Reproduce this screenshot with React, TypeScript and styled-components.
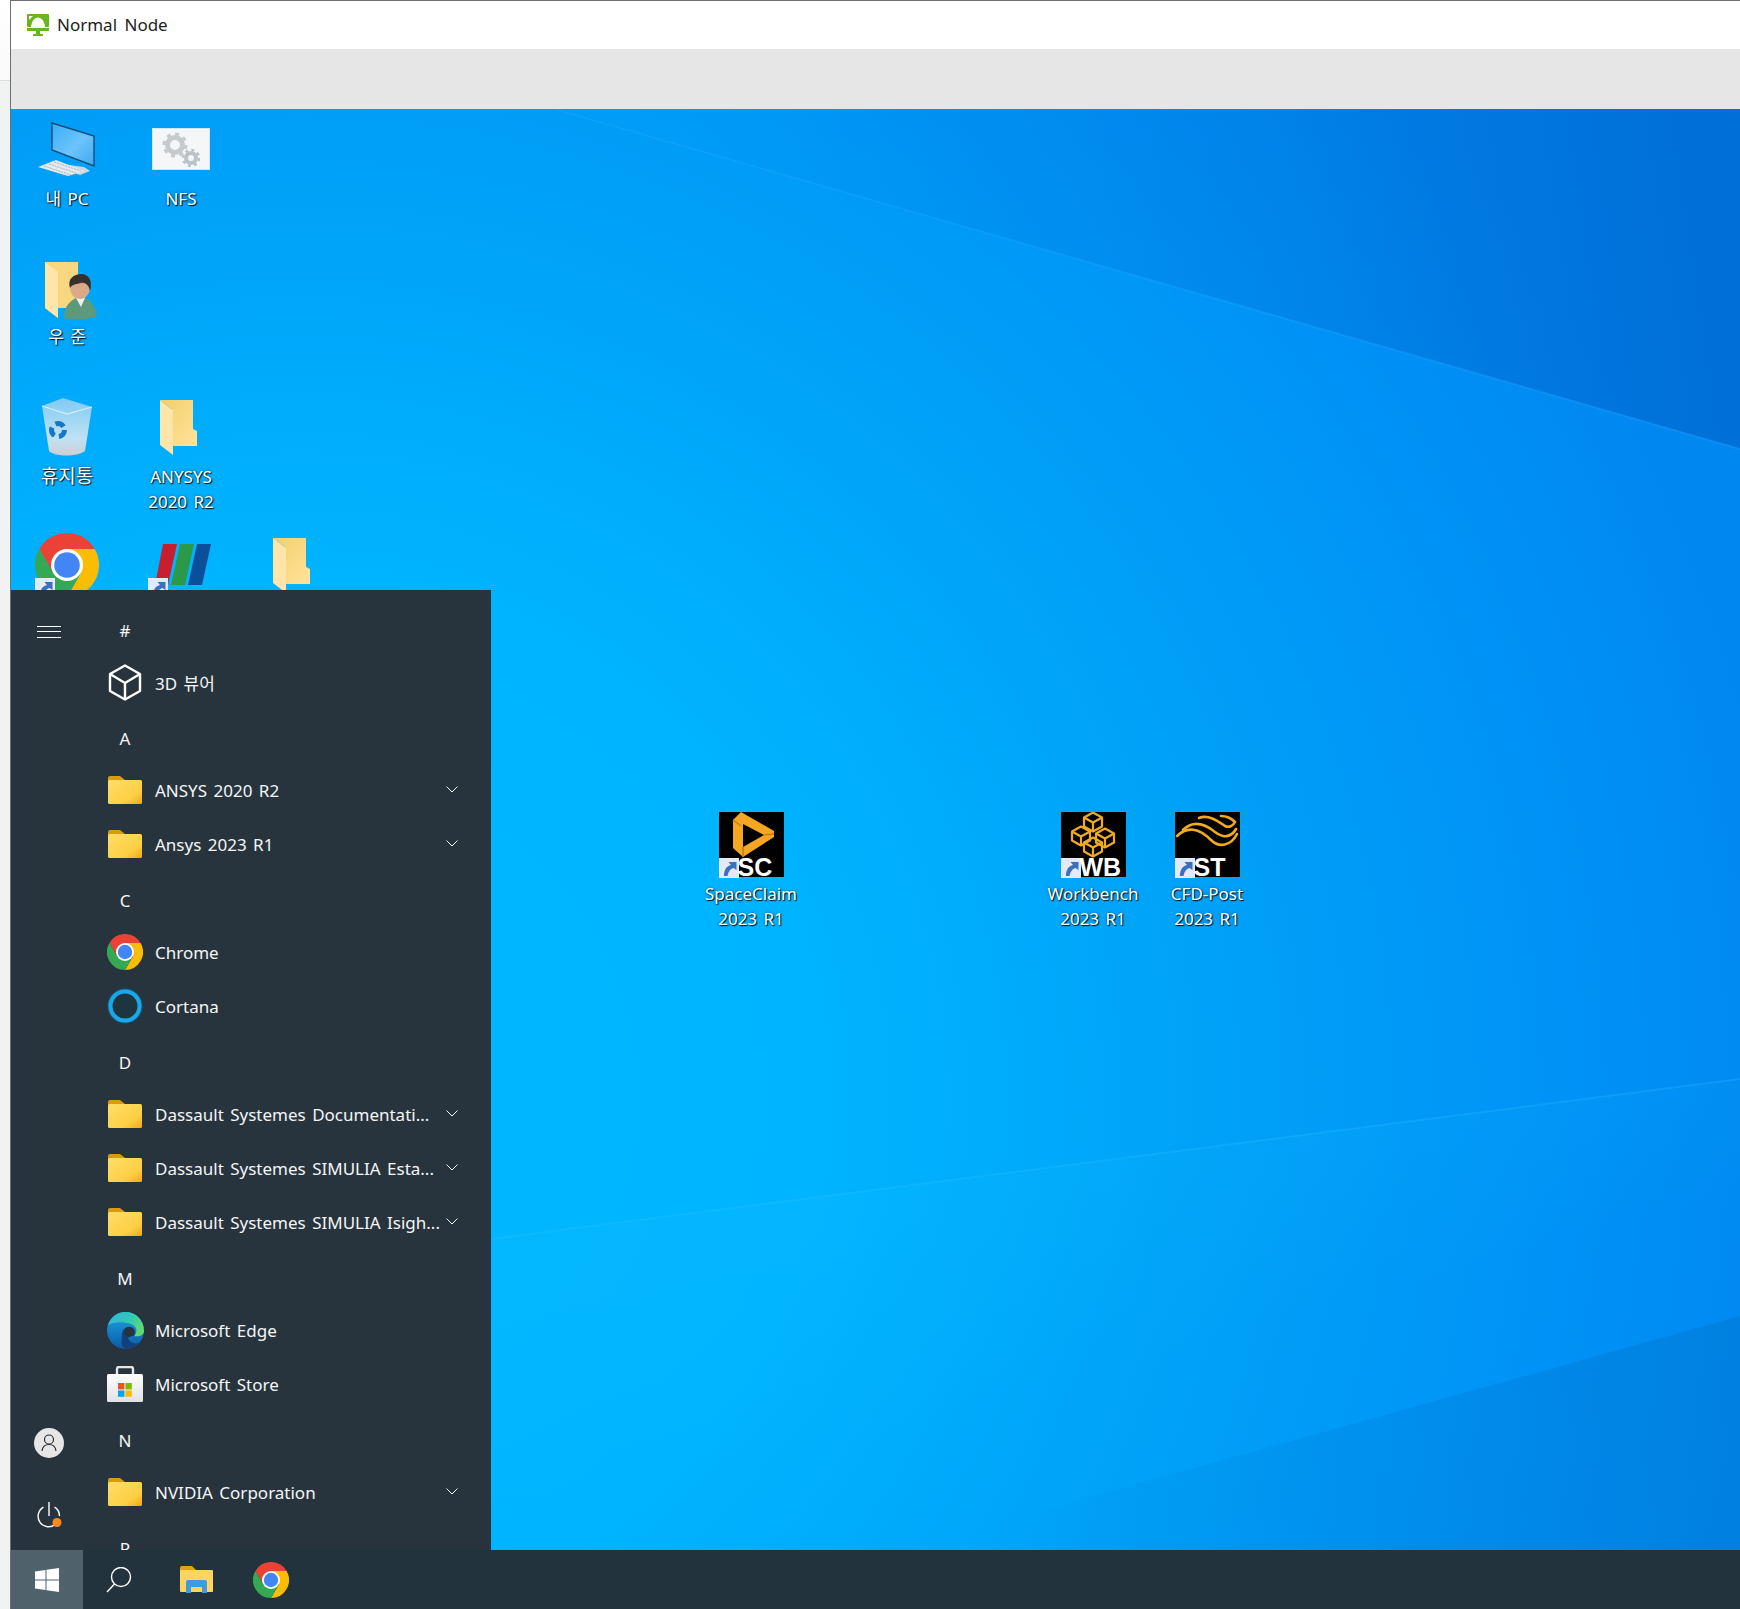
import React, { FC, ReactNode } from "react";
import styled, { createGlobalStyle } from "styled-components";

const GlobalStyle = createGlobalStyle`
  html, body { margin: 0; padding: 0; background: #f1f1f1; }
  * { box-sizing: border-box; }
  #root { font-family: "Noto Sans", "Noto Sans CJK KR", sans-serif; }
`;

// page frame
const Page = styled.div`
  display: flex;
  width: 1740px;
  height: 1609px;
  overflow: hidden;
`;

const SideStrip = styled.div`
  width: 10px;
  background: linear-gradient(#ffffff 0, #fafafa 80px, #dcdcdc 80px, #dcdcdc 81px, #f1f3f3 81px);
`;

const RemoteWindow = styled.div`
  flex: 1;
  display: flex;
  flex-direction: column;
  border-left: 1px solid #6f6f6f;
  border-top: 1px solid #6f6f6f;
`;

const TitleBar = styled.div`
  height: 48px;
  background: #fff;
  display: flex;
  align-items: center;
  gap: 8px;
  padding: 0 0 1px 16px;
  font-size: 17px;
  word-spacing: 3px;
  color: #222;
`;

const ToolBar = styled.div`
  height: 60px;
  background: #e6e6e6;
`;

const Desktop = styled.div`
  flex: 1;
  position: relative;
  overflow: hidden;
  background: #00a2f8;
`;

const Wall = styled.svg`
  position: absolute;
  inset: 0;
`;

// desktop icons sit on a free canvas
const DesktopItem = styled.div<{ $cx: number; $top: number }>`
  position: absolute;
  left: ${(p) => p.$cx - 60}px;
  top: ${(p) => p.$top}px;
  width: 120px;
  display: flex;
  flex-direction: column;
  align-items: center;
  color: #fff;
  line-height: 25px;
  text-align: center;
  word-spacing: 2px;
  text-shadow: 1px 1px 1px rgba(0, 0, 0, 0.9), 0 0 3px rgba(0, 40, 80, 0.6);
`;

const ItemLabel = styled.div<{ $size?: number }>`
  font-size: ${(p) => p.$size || 17}px;
`;

const IconBox = styled.div`
  position: relative;
  height: 66px;
  margin-bottom: 4px;
  display: flex;
  align-items: center;
  justify-content: center;
`;

const BadgeSpot = styled.div<{ $left: number; $top: number }>`
  position: absolute;
  left: ${(p) => p.$left}px;
  top: ${(p) => p.$top}px;
  width: 20px;
  height: 20px;
  line-height: 0;
`;

const Tile = styled.div`
  position: relative;
  width: 65px;
  height: 65px;
  background: #000;
  line-height: 0;
`;

const TileLabel = styled.span`
  position: absolute;
  left: 19px;
  bottom: 0;
  color: #fff;
  font-family: "Liberation Sans Narrow", "Liberation Sans", sans-serif;
  font-weight: 700;
  font-size: 25px;
  line-height: 20px;
  text-shadow: none;
`;

const NfsCard = styled.div`
  width: 58px;
  height: 42px;
  background: #f4f6f8;
  border: 1px solid #cfe6f2;
  line-height: 0;
`;

// start menu
const StartMenu = styled.div`
  position: absolute;
  left: 0;
  bottom: 0;
  width: 480px;
  height: 960px;
  display: flex;
  background: #27343d;
  color: #f4f6f7;
`;

const Rail = styled.div`
  width: 76px;
  display: flex;
  flex-direction: column;
  align-items: center;
  justify-content: space-between;
  padding: 36px 0 22px;
`;

const Burger = styled.div`
  width: 24px;
  height: 12px;
  border-top: 1px solid #fff;
  border-bottom: 1px solid #fff;
  position: relative;

  &::after {
    content: "";
    position: absolute;
    left: 0;
    right: 0;
    top: 4px;
    height: 1px;
    background: #fff;
  }
`;

const RailBottom = styled.div`
  display: flex;
  flex-direction: column;
  align-items: center;
  gap: 44px;
  line-height: 0;
`;

const AppList = styled.div`
  flex: 1;
  padding-top: 11px;
  overflow: hidden;
`;

const GroupHeader = styled.div`
  height: 54px;
  margin-left: 16px;
  width: 44px;
  padding-top: 5px;
  display: flex;
  align-items: center;
  justify-content: center;
  font-size: 17px;
`;

const AppRow = styled.div`
  height: 54px;
  display: flex;
  align-items: center;
  padding: 0 33px 0 16px;
  font-size: 17px;
  word-spacing: 2px;
`;

const AppIcon = styled.div`
  width: 44px;
  display: flex;
  justify-content: center;
  line-height: 0;
  margin-right: 8px;
`;

const AppName = styled.span`
  flex: 1;
  white-space: nowrap;
  padding-top: 1px;
`;

const Chevron = styled.svg`
  width: 12px;
  height: 7px;
  margin-top: -1px;
`;

// taskbar
const TaskBar = styled.div`
  height: 59px;
  background: #23333e;
  display: flex;
  position: relative;
`;

const TaskItem = styled.div<{ $w: number; $on?: boolean; $ml?: number }>`
  width: ${(p) => p.$w}px;
  margin-left: ${(p) => p.$ml || 0}px;
  background: ${(p) => (p.$on ? "#4f626c" : "transparent")};
  display: flex;
  align-items: center;
  justify-content: center;
  line-height: 0;
`;

// icons
const Wallpaper = () => (
  <Wall width="1729" height="1441" viewBox="11 109 1729 1441">
    <defs>
      <radialGradient id="wbase" gradientUnits="userSpaceOnUse" cx="300" cy="1100" r="1500">
        <stop offset="0" stopColor="#00b8ff" />
        <stop offset="0.35" stopColor="#00b4ff" />
        <stop offset="0.6" stopColor="#00a2f8" />
        <stop offset="0.85" stopColor="#0092f6" />
        <stop offset="1" stopColor="#0088f0" />
      </radialGradient>
      <linearGradient id="wtop" gradientUnits="userSpaceOnUse" x1="700" y1="260" x2="1740" y2="110">
        <stop offset="0" stopColor="#0068d0" stopOpacity="0" />
        <stop offset="0.55" stopColor="#0068d0" stopOpacity="0.28" />
        <stop offset="1" stopColor="#0068d0" stopOpacity="0.8" />
      </linearGradient>
      <linearGradient id="wlow" gradientUnits="userSpaceOnUse" x1="1000" y1="1560" x2="1740" y2="1380">
        <stop offset="0" stopColor="#0078d0" stopOpacity="0" />
        <stop offset="1" stopColor="#0078d0" stopOpacity="0.5" />
      </linearGradient>
      <linearGradient id="wband" gradientUnits="userSpaceOnUse" x1="1100" y1="1150" x2="1160" y2="1360">
        <stop offset="0" stopColor="#19c0ff" stopOpacity="0.12" />
        <stop offset="1" stopColor="#19c0ff" stopOpacity="0" />
      </linearGradient>
    </defs>
    <rect x="11" y="109" width="1729" height="1441" fill="url(#wbase)" />
    <polygon points="554,109 1740,449 1740,109" fill="url(#wtop)" />
    <polygon points="490,1239 1740,1079 1740,1400 490,1500" fill="url(#wband)" />
    <polygon points="900,1550 1740,1316 1740,1550" fill="url(#wlow)" />
    <line x1="554" y1="109" x2="1740" y2="449" stroke="#1aa4ff" strokeOpacity="0.4" strokeWidth="2" />
    <line x1="490" y1="1239" x2="1740" y2="1079" stroke="#3cc6ff" strokeOpacity="0.22" strokeWidth="2" />
  </Wall>
);

const NodeLogo = () => (
  <svg width="22" height="22" viewBox="0 0 22 22">
    <rect x="0" y="0" width="22" height="13" rx="1" fill="#6ab41e" />
    <path d="M4 13C4.6 7 7.5 3.6 11 3.6S17.4 7 18 13Z" fill="#fff" />
    <path d="M2 2H6L2 6Z" fill="#fff" />
    <rect x="0" y="14" width="22" height="3" fill="#6ab41e" />
    <rect x="9" y="17" width="4" height="3" fill="#6ab41e" />
    <rect x="6" y="20" width="10" height="2" fill="#6ab41e" />
  </svg>
);

const PcIcon = () => (
  <svg width="58" height="58" viewBox="0 0 58 58">
    <defs>
      <linearGradient id="pcs" x1="0" y1="0" x2="1" y2="1">
        <stop offset="0" stopColor="#3aaef8" />
        <stop offset="0.55" stopColor="#6cc4fb" />
        <stop offset="1" stopColor="#3fa9f5" />
      </linearGradient>
    </defs>
    <polygon points="24,44 46,47 52,51 42,55 24,49" fill="#cfd9df" />
    <polygon points="14,3 56,16 56,46 14,30" fill="url(#pcs)" stroke="#174f78" strokeWidth="1.4" />
    <polygon points="0,47 18,40 46,51 30,56" fill="#e4eaee" />
    <path d="M6 46L33 55M11 44L38 53M16 42L43 51" stroke="#a8b4bc" strokeWidth="1" strokeDasharray="2 1" />
  </svg>
);

const NfsIcon = () => (
  <NfsCard>
    <svg width="56" height="40" viewBox="0 0 56 40">
      <circle cx="22" cy="16" r="7.5" fill="none" stroke="#c5cacd" strokeWidth="5" />
      <circle cx="22" cy="16" r="11" fill="none" stroke="#c5cacd" strokeWidth="3" strokeDasharray="4 4.6" />
      <circle cx="38" cy="29" r="5" fill="none" stroke="#bcc2c5" strokeWidth="4" />
      <circle cx="38" cy="29" r="8" fill="none" stroke="#bcc2c5" strokeWidth="2.4" strokeDasharray="3 3.3" />
    </svg>
  </NfsCard>
);

const DeskFolder = () => (
  <svg width="42" height="56" viewBox="0 0 42 56">
    <defs>
      <linearGradient id="dfp" x1="0" y1="0" x2="1" y2="1">
        <stop offset="0" stopColor="#f3cf6c" />
        <stop offset="1" stopColor="#ffe39b" />
      </linearGradient>
    </defs>
    <path d="M0 1H33V30L37 32V47H12V10Z" fill="url(#dfp)" />
    <path d="M0 1L13 11V56L0 46Z" fill="#ffe6a8" />
  </svg>
);

const UserFolder = () => (
  <svg width="60" height="66" viewBox="0 0 60 66">
    <g transform="translate(8 8)">
      <path d="M0 0H33V46H13V56L0 46Z" fill="#f7d77f" />
      <path d="M0 0L13 10V56L0 46Z" fill="#ffe6a8" />
      <path d="M19 56C19 44 26 36 36 35C46 36 51 46 52 54C44 58 28 58 19 56Z" fill="#5d9a7b" />
      <path d="M31 36L36 45L40 36Z" fill="#eef2ee" />
      <ellipse cx="35" cy="26" rx="10" ry="11" fill="#d9a988" />
      <path d="M25 26C22 17 29 12 36 12C44 12 48 19 45 29C44 24 41 20 36 21C32 22 27 22 25 26Z" fill="#37302d" />
    </g>
  </svg>
);

const RecycleBin = () => (
  <svg width="52" height="58" viewBox="0 0 52 58">
    <defs>
      <linearGradient id="rb" x1="0" y1="0" x2="0" y2="1">
        <stop offset="0" stopColor="#7fcaf4" />
        <stop offset="0.7" stopColor="#bfe2f4" />
        <stop offset="1" stopColor="#cfcfd2" />
      </linearGradient>
    </defs>
    <path d="M1 8L22 0L51 9L44 53C36 59 14 59 8 53Z" fill="url(#rb)" />
    <path d="M1 8L26 16L51 9" fill="none" stroke="#d6f0fb" strokeWidth="1.2" />
    <circle cx="17" cy="32" r="6.5" fill="none" stroke="#1677c6" strokeWidth="5" strokeDasharray="9 4.6" />
  </svg>
);

const ChromeIcon: FC<{ size: number }> = ({ size }) => (
  <svg width={size} height={size} viewBox="0 0 48 48">
    <path d="M3.2 12A24 24 0 0 1 44.8 12H24L13.6 30Z" fill="#ea4335" />
    <path d="M44.8 12A24 24 0 0 1 24 48L34.4 30L24 12Z" fill="#fbbc04" />
    <path d="M24 48A24 24 0 0 1 3.2 12L13.6 30H34.4Z" fill="#34a853" />
    <circle cx="24" cy="24" r="12" fill="#fff" />
    <circle cx="24" cy="24" r="9.6" fill="#4285f4" />
  </svg>
);

const ParaviewIcon = () => (
  <svg width="62" height="42" viewBox="0 0 62 42">
    <polygon points="13,0 27,0 18,41 5,41" fill="#c81f30" />
    <polygon points="30,0 44,0 35,41 21,41" fill="#2a9a4a" />
    <polygon points="47,0 61,0 52,41 38,41" fill="#0b4f9a" />
  </svg>
);

const ShortcutBadge = () => (
  <svg width="20" height="20" viewBox="0 0 20 20">
    <rect width="20" height="20" fill="#e4e9f6" />
    <path d="M5 18C5 11 8 8 12 7L9.5 4H17.5V12L14.5 10C11 11 9 14 8.5 18Z" fill="#3b6fc0" />
  </svg>
);

const ScLogo = () => (
  <svg width="65" height="46" viewBox="0 0 65 46">
    <path d="M14 8L22 0L55 19V25L24 45L14 36Z" fill="#f5a623" />
    <path d="M24 12L45 23L24 35Z" fill="#000" />
    <path d="M14 8L22 14M55 22L44 23M24 45V35" stroke="#c47f10" strokeWidth="1.5" />
  </svg>
);

const cubes = [
  [32, 10],
  [20, 24],
  [44, 26],
  [32, 35],
];

const WbLogo = () => (
  <svg width="65" height="46" viewBox="0 0 65 46">
    <g fill="none" stroke="#f2aa1e" strokeWidth="2.2" strokeLinejoin="round">
      {cubes.map(([x, y]) => (
        <g key={`${x}-${y}`} transform={`translate(${x} ${y})`}>
          <path d="M0 -9.5L9 -4.5V4.5L0 9.5L-9 4.5V-4.5Z" />
          <path d="M-9 -4.5L0 0.5L9 -4.5M0 0.5V9.5" />
        </g>
      ))}
    </g>
  </svg>
);

const StLogo = () => (
  <svg width="65" height="46" viewBox="0 0 65 46">
    <g fill="none" stroke="#f2aa1e" strokeWidth="2.6" strokeLinecap="round">
      <path d="M2 24C12 14 24 16 36 28C44 36 56 34 62 22" />
      <path d="M8 18C18 8 30 12 40 20C48 26 56 26 61 17" />
      <path d="M24 6C34 2 44 10 50 14C54 16 58 14 60 10C56 6 50 4 46 4" />
    </g>
  </svg>
);

const CubeIcon = () => (
  <svg width="34" height="37" viewBox="0 0 34 37">
    <g fill="none" stroke="#fff" strokeWidth="2.4" strokeLinejoin="round">
      <path d="M17 1.5L32 10V27L17 35.5L2 27V10Z" />
      <path d="M2 10L17 19L32 10M17 19V35.5" />
    </g>
  </svg>
);

const MenuFolder = () => (
  <svg width="34" height="28" viewBox="0 0 34 28">
    <defs>
      <linearGradient id="mf" x1="0" y1="0" x2="1" y2="1">
        <stop offset="0" stopColor="#ffde66" />
        <stop offset="0.7" stopColor="#fdcf45" />
        <stop offset="1" stopColor="#f0a912" />
      </linearGradient>
    </defs>
    <path d="M0 2Q0 0 2 0H12L17 4V10H0Z" fill="#d99a0e" />
    <rect x="0" y="4" width="34" height="24" rx="1.5" fill="url(#mf)" />
  </svg>
);

const CortanaIcon = () => (
  <svg width="36" height="36" viewBox="0 0 36 36">
    <circle cx="18" cy="18" r="16.5" fill="none" stroke="#125c86" strokeWidth="2" />
    <circle cx="18" cy="18" r="14.5" fill="#1e3540" stroke="#1aa7e8" strokeWidth="4" />
  </svg>
);

const EdgeIcon = () => (
  <svg width="37" height="37" viewBox="0 0 37 37">
    <defs>
      <linearGradient id="eb" x1="0" y1="0" x2="0" y2="1">
        <stop offset="0" stopColor="#1ea5e4" />
        <stop offset="1" stopColor="#0c59a6" />
      </linearGradient>
      <linearGradient id="et" x1="0" y1="0" x2="1" y2="0.6">
        <stop offset="0" stopColor="#2bb4e8" />
        <stop offset="0.6" stopColor="#35c9b0" />
        <stop offset="1" stopColor="#5fdc6b" />
      </linearGradient>
    </defs>
    <circle cx="18.5" cy="18.5" r="18.5" fill="url(#eb)" />
    <path d="M1 13C4 4 11 0 18.5 0C29 0 37 8 37 19C37 23 33 25 27 24C31 20 30 14 24 12C15 9 6 10 1 13Z" fill="url(#et)" />
    <path d="M15 23C15 17 20 14 24 15C28 16 29 20 27 24C23 24 20 25 22 28C24 31 28 32 31 31C27 36 21 38 17 36C13 33 15 28 15 23Z" fill="#13407c" />
    <circle cx="22" cy="20" r="5" fill="#27343d" />
  </svg>
);

const StoreIcon = () => (
  <svg width="36" height="36" viewBox="0 0 36 36">
    <defs>
      <linearGradient id="sb" x1="0" y1="0" x2="0" y2="1">
        <stop offset="0" stopColor="#ffffff" />
        <stop offset="1" stopColor="#dfe2e4" />
      </linearGradient>
    </defs>
    <path d="M10 10V3Q10 1 12 1H24Q26 1 26 3V10" fill="none" stroke="#e6e6e6" strokeWidth="2.4" />
    <rect x="0" y="8" width="36" height="28" rx="1.5" fill="url(#sb)" />
    <rect x="11" y="17" width="6.4" height="6.4" fill="#f25022" />
    <rect x="18.4" y="17" width="6.4" height="6.4" fill="#7fba00" />
    <rect x="11" y="24.4" width="6.4" height="6.4" fill="#00a4ef" />
    <rect x="18.4" y="24.4" width="6.4" height="6.4" fill="#ffb900" />
  </svg>
);

const UserIcon = () => (
  <svg width="30" height="30" viewBox="0 0 30 30">
    <circle cx="15" cy="15" r="15" fill="#e6e6e6" />
    <g fill="none" stroke="#2b2b2b" strokeWidth="1.2">
      <circle cx="15" cy="11.5" r="4.5" />
      <path d="M8 23C8.5 18.5 11 16.5 15 16.5S21.5 18.5 22 23" />
    </g>
  </svg>
);

const PowerIcon = () => (
  <svg width="26" height="26" viewBox="0 0 26 26">
    <g fill="none" stroke="#fff" strokeWidth="1.4">
      <path d="M13 0V14" />
      <path d="M7.5 5.1A10.5 10.5 0 1 0 19.5 22.2" />
      <path d="M18.5 5.1A10.5 10.5 0 0 1 23.5 14" />
    </g>
    <circle cx="21" cy="20.5" r="4.5" fill="#f78a1e" />
  </svg>
);

const WinLogo = () => (
  <svg width="24" height="24" viewBox="0 0 24 24" fill="#fff">
    <path d="M0 3.5L10.5 2V11.5H0Z" />
    <path d="M11.5 1.8L24 0V11.5H11.5Z" />
    <path d="M0 12.5H10.5V22L0 20.5Z" />
    <path d="M11.5 12.5H24V24L11.5 22.2Z" />
  </svg>
);

const SearchIcon = () => (
  <svg width="26" height="26" viewBox="0 0 26 26">
    <g fill="none" stroke="#fff" strokeWidth="1.4">
      <circle cx="15" cy="10" r="9.5" />
      <path d="M8.5 17L1 25" />
    </g>
  </svg>
);

const ExplorerIcon = () => (
  <svg width="33" height="27" viewBox="0 0 33 27">
    <path d="M0 2Q0 0 2 0H12L16 4V8H0Z" fill="#dfa214" />
    <rect x="0" y="4" width="33" height="22" rx="1" fill="#ffd45f" />
    <path d="M6 27V16Q6 14 8 14H25Q27 14 27 16V27H22V21H11V27Z" fill="#3f9be0" />
  </svg>
);

type DeskEntry = {
  cx: number;
  top: number;
  icon: ReactNode;
  label?: string[];
  size?: number;
  badge?: [number, number];
};

const TileIcon: FC<{ logo: ReactNode; text: string }> = ({ logo, text }) => (
  <Tile>
    {logo}
    <BadgeSpot $left={0} $top={46}>
      <ShortcutBadge />
    </BadgeSpot>
    <TileLabel>{text}</TileLabel>
  </Tile>
);

const deskEntries: DeskEntry[] = [
  { cx: 56, top: 7, icon: <PcIcon />, label: ["내 PC"] },
  { cx: 170, top: 7, icon: <NfsIcon />, label: ["NFS"] },
  { cx: 56, top: 145, icon: <UserFolder />, label: ["우 준"] },
  { cx: 56, top: 285, icon: <RecycleBin />, label: ["휴지통"], size: 19 },
  { cx: 170, top: 285, icon: <DeskFolder />, label: ["ANYSYS", "2020 R2"] },
  { cx: 56, top: 423, icon: <ChromeIcon size={64} />, badge: [0, 46] },
  { cx: 170, top: 423, icon: <ParaviewIcon />, badge: [-2, 46] },
  { cx: 283, top: 423, icon: <DeskFolder /> },
  { cx: 740, top: 702, icon: <TileIcon logo={<ScLogo />} text="SC" />, label: ["SpaceClaim", "2023 R1"] },
  { cx: 1082, top: 702, icon: <TileIcon logo={<WbLogo />} text="WB" />, label: ["Workbench", "2023 R1"] },
  { cx: 1196, top: 702, icon: <TileIcon logo={<StLogo />} text="ST" />, label: ["CFD-Post", "2023 R1"] },
];

type MenuEntry =
  | { kind: "head"; text: string }
  | { kind: "app"; text: string; icon: ReactNode; more?: boolean };

const menuEntries: MenuEntry[] = [
  { kind: "head", text: "#" },
  { kind: "app", text: "3D 뷰어", icon: <CubeIcon /> },
  { kind: "head", text: "A" },
  { kind: "app", text: "ANSYS 2020 R2", icon: <MenuFolder />, more: true },
  { kind: "app", text: "Ansys 2023 R1", icon: <MenuFolder />, more: true },
  { kind: "head", text: "C" },
  { kind: "app", text: "Chrome", icon: <ChromeIcon size={36} /> },
  { kind: "app", text: "Cortana", icon: <CortanaIcon /> },
  { kind: "head", text: "D" },
  { kind: "app", text: "Dassault Systemes Documentati...", icon: <MenuFolder />, more: true },
  { kind: "app", text: "Dassault Systemes SIMULIA Esta...", icon: <MenuFolder />, more: true },
  { kind: "app", text: "Dassault Systemes SIMULIA Isigh...", icon: <MenuFolder />, more: true },
  { kind: "head", text: "M" },
  { kind: "app", text: "Microsoft Edge", icon: <EdgeIcon /> },
  { kind: "app", text: "Microsoft Store", icon: <StoreIcon /> },
  { kind: "head", text: "N" },
  { kind: "app", text: "NVIDIA Corporation", icon: <MenuFolder />, more: true },
  { kind: "head", text: "P" },
];

const App = () => {
  return (
    <Page>
      <GlobalStyle />
      <SideStrip />
      <RemoteWindow>
        <TitleBar>
          <NodeLogo />
          Normal Node
        </TitleBar>
        <ToolBar />
        <Desktop>
          <Wallpaper />
          {deskEntries.map((d) => (
            <DesktopItem key={`${d.cx}-${d.top}`} $cx={d.cx} $top={d.top}>
              <IconBox>
                {d.icon}
                {d.badge && (
                  <BadgeSpot $left={d.badge[0]} $top={d.badge[1]}>
                    <ShortcutBadge />
                  </BadgeSpot>
                )}
              </IconBox>
              {d.label &&
                d.label.map((l) => (
                  <ItemLabel key={l} $size={d.size}>
                    {l}
                  </ItemLabel>
                ))}
            </DesktopItem>
          ))}
          <StartMenu>
            <Rail>
              <Burger />
              <RailBottom>
                <UserIcon />
                <PowerIcon />
              </RailBottom>
            </Rail>
            <AppList>
              {menuEntries.map((m) =>
                m.kind === "head" ? (
                  <GroupHeader key={m.text}>{m.text}</GroupHeader>
                ) : (
                  <AppRow key={m.text}>
                    <AppIcon>{m.icon}</AppIcon>
                    <AppName>{m.text}</AppName>
                    {m.more && (
                      <Chevron viewBox="0 0 12 7">
                        <path d="M0.5 0.5L6 6L11.5 0.5" fill="none" stroke="#fff" strokeWidth="1" />
                      </Chevron>
                    )}
                  </AppRow>
                )
              )}
            </AppList>
          </StartMenu>
        </Desktop>
        <TaskBar>
          <TaskItem $w={72} $on>
            <WinLogo />
          </TaskItem>
          <TaskItem $w={72}>
            <SearchIcon />
          </TaskItem>
          <TaskItem $w={74} $ml={4}>
            <ExplorerIcon />
          </TaskItem>
          <TaskItem $w={74} $ml={1}>
            <ChromeIcon size={36} />
          </TaskItem>
        </TaskBar>
      </RemoteWindow>
    </Page>
  );
};

export default App;
